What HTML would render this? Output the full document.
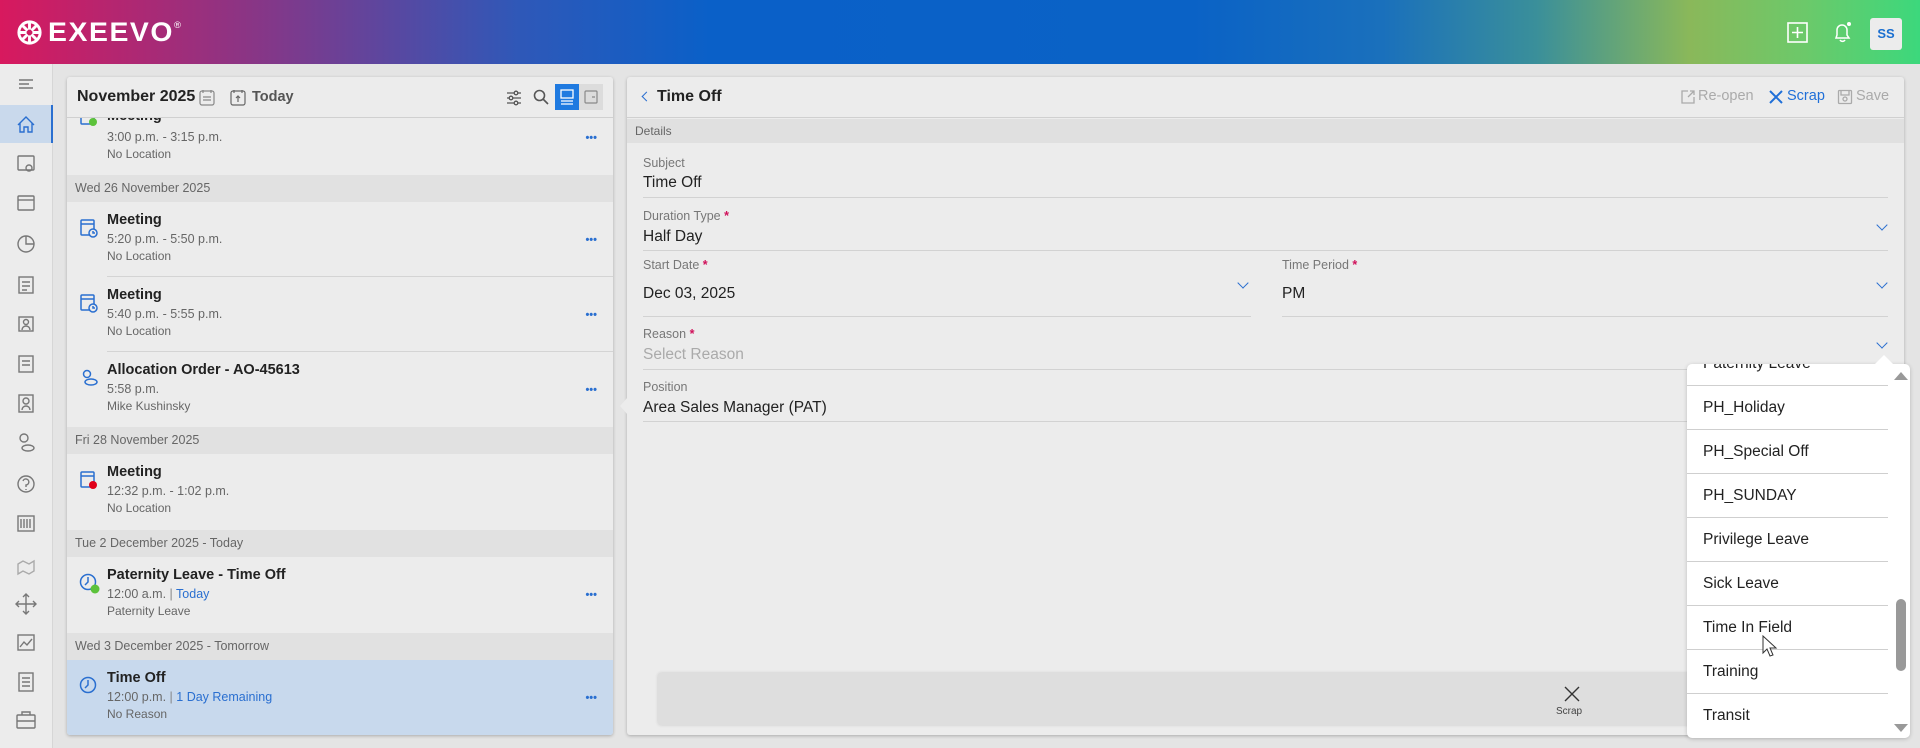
<!DOCTYPE html>
<html><head><meta charset="utf-8"><style>
*{box-sizing:border-box;margin:0;padding:0}
body{width:1920px;height:748px;overflow:hidden;background:#e4e4e4;font-family:"Liberation Sans",sans-serif;position:relative;color:#222}
.a{position:absolute}
#hdr{left:0;top:0;width:1920px;height:64px;background:linear-gradient(90deg,#d8195e 0%,#8a3585 13%,#2f58b8 27%,#0a60c8 37%,#0a62c6 62%,#1a70bc 72%,#3a8f9a 80%,#8ab85a 88%,#6cc96a 94%,#3cd87c 100%)}
#side{left:0;top:64px;width:53px;height:684px;background:#ececec;border-right:1px solid #d6d6d6}
.panel{background:#ececec;box-shadow:0 1px 3px rgba(0,0,0,.25);border-radius:3px}
.ph{font-weight:bold;font-size:16px}
.date{position:absolute;left:0;width:546px;background:#e1e1e1;color:#666;font-size:12.5px;padding-left:8px;line-height:27px}
.it{position:absolute;left:0;width:546px}
.it b{position:absolute;left:40px;font-size:14.5px;color:#222}
.it .t{position:absolute;left:40px;font-size:12.5px;color:#666}
.it .dots{position:absolute;right:16px;color:#2a6fd0;font-size:11px;font-weight:bold;letter-spacing:0px}
.sep{position:absolute;left:40px;right:0;height:1px;background:#d4d4d4}
.lbl{position:absolute;font-size:12.5px;color:#777}
.lbl i{color:#d0105a;font-style:normal;font-weight:bold}
.val{position:absolute;font-size:15.5px;color:#222}
.ln{position:absolute;height:1px;background:#d2d2d2}
.chev{position:absolute;width:8px;height:8px;border-right:1.5px solid #2a6fd0;border-bottom:1.5px solid #2a6fd0;transform:rotate(45deg)}
.dd{position:absolute;left:0;width:201px;font-size:15.5px;color:#222;padding-left:16px;height:44px;line-height:44px;border-bottom:1px solid #cfcfcf}
</style></head><body>
<div id="hdr" class="a">
 <svg class="a" style="left:15px;top:18px" width="29" height="29" viewBox="0 0 30 30" fill="none" stroke="#fff" stroke-width="3"><circle cx="15" cy="15" r="11"/><path d="M15 4v8M26 15h-8M15 26v-8M4 15h8M8 8l5 5M22 8l-5 5M22 22l-5-5M8 22l5-5"/></svg>
 <div class="a" style="left:48px;top:17px;color:#fff;font-size:27px;font-weight:bold;letter-spacing:1.5px;transform:scaleX(1.05);transform-origin:left">EXEEVO<sup style="font-size:9px;font-weight:normal;vertical-align:13px;letter-spacing:0">®</sup></div>
 <svg class="a" style="left:1787px;top:22px" width="21" height="21" viewBox="0 0 21 21" fill="none" stroke="#fff" stroke-width="1.6"><rect x="1" y="1" width="19" height="19"/><path d="M10.5 5v11M5 10.5h11"/></svg>
 <svg class="a" style="left:1832px;top:20px" width="22" height="24" viewBox="0 0 22 24" fill="none" stroke="#fff" stroke-width="1.5"><path d="M4 18h13l-2-3v-5a5 5 0 0 0-10 0v5z M8 20a3 3 0 0 0 5 0"/><circle cx="17" cy="4" r="2" fill="#fff" stroke="none"/></svg>
 <div class="a" style="left:1870px;top:18px;width:32px;height:32px;background:#ececec;border-radius:3px;color:#1a6fd0;font-weight:bold;font-size:13px;text-align:center;line-height:32px">SS</div>
</div>
<div id="side" class="a">
 <div class="a" style="left:0;top:41px;width:53px;height:38px;background:#c9d9ec;border-right:2px solid #2a6fd0"></div>
 <svg width="53" height="684" class="a" style="left:0;top:0" fill="none" stroke="#777" stroke-width="1.4">
  <path d="M19 16h14M19 20h10M19 24h14"/>
  <path d="M18 61l8-8 8 8M20 59v9h4v-5h4v5h4v-9" stroke="#2a6fd0"/>
  <rect x="18" y="92" width="16" height="14" rx="1"/><circle cx="29" cy="104" r="3"/>
  <rect x="18" y="132" width="16" height="14" rx="1"/><path d="M18 136h16"/>
  <circle cx="26" cy="180" r="8"/><path d="M26 172v8h8"/>
  <rect x="19" y="213" width="14" height="16"/><path d="M22 218h8M22 222h8M22 226h5"/>
  <rect x="19" y="253" width="14" height="14"/><circle cx="26" cy="258" r="2.5"/><path d="M22 266a4 4 0 0 1 8 0"/>
  <rect x="19" y="292" width="14" height="16"/><path d="M22 297h8M22 301h8"/>
  <rect x="19" y="331" width="14" height="17"/><circle cx="26" cy="337" r="3"/><path d="M22 346a4 4 0 0 1 8 0"/>
  <circle cx="24" cy="374" r="4"/><ellipse cx="28" cy="384" rx="6" ry="3"/>
  <circle cx="26" cy="420" r="8"/><path d="M23 417a3 3 0 1 1 3 4v2M26 425v1"/>
  <rect x="18" y="452" width="16" height="15"/><path d="M21 455v9M24 455v9M27 455v9M30 455v9"/>
  <path d="M18 500l5-3 6 3 5-3v10l-5 3-6-3-5 3z" stroke="#aaa"/>
  <path d="M26 530v20M16 540h20M23 533l3-3 3 3M23 547l3 3 3-3M19 537l-3 3 3 3M33 537l3 3-3 3"/>
  <rect x="18" y="571" width="16" height="15"/><path d="M20 583l4-5 3 3 5-6"/>
  <rect x="19" y="609" width="14" height="18"/><path d="M22 614h8M22 618h8M22 622h8"/>
  <rect x="17" y="651" width="18" height="13" rx="1"/><path d="M22 651v-3h8v3M17 657h18"/>
 </svg>
</div>

<div class="a panel" style="left:67px;top:77px;width:546px;height:658px;overflow:hidden">
 <div class="it" style="top:35px;height:63px">
  <svg class="a" style="left:12px;top:-5px" width="20" height="22" viewBox="0 0 20 22" fill="none" stroke="#2a6fd0" stroke-width="1.5"><rect x="2" y="2" width="13" height="15" rx="1"/><path d="M2 6h13"/><circle cx="14" cy="15" r="4" fill="#5cc23a" stroke="none"/></svg>
  <b style="top:-4px">Meeting</b><div class="t" style="top:18px">3:00 p.m. - 3:15 p.m.</div><div class="t" style="top:35px;font-size:12px">No Location</div><div class="dots" style="top:20px">•••</div>
 </div>
 <div class="a" style="left:0;top:0;width:546px;height:41px;border-bottom:1px solid #d0d0d0;background:#ececec;z-index:2">
  <div class="a ph" style="left:10px;top:11px">November 2025</div>
  <svg class="a" style="left:132px;top:12px" width="16" height="17" viewBox="0 0 16 17" fill="none" stroke="#888" stroke-width="1.2"><rect x="1" y="2" width="14" height="14" rx="2"/><path d="M4 1v3M12 1v3M4 8h8M4 11h8"/></svg>
  <svg class="a" style="left:163px;top:12px" width="16" height="17" viewBox="0 0 16 17" fill="none" stroke="#666" stroke-width="1.2"><rect x="1" y="2" width="14" height="14" rx="2"/><path d="M4 1v3M12 1v3M8 13V7M6 9l2-2 2 2"/></svg>
  <div class="a" style="left:185px;top:12px;font-size:14.5px;color:#555;font-weight:bold">Today</div>
  <svg class="a" style="left:439px;top:12px" width="16" height="17" viewBox="0 0 16 17" fill="none" stroke="#555" stroke-width="1.3"><path d="M1 4h14M1 9h14M1 14h14"/><circle cx="10" cy="4" r="1.8" fill="#ececec"/><circle cx="5" cy="9" r="1.8" fill="#ececec"/><circle cx="10" cy="14" r="1.8" fill="#ececec"/></svg>
  <svg class="a" style="left:466px;top:12px" width="16" height="16" viewBox="0 0 16 16" fill="none" stroke="#555" stroke-width="1.6"><circle cx="6.5" cy="6.5" r="5"/><path d="M10 10l5 5"/></svg>
  <div class="a" style="left:488px;top:7px;width:24px;height:26px;background:#1f7ae0"></div>
  <svg class="a" style="left:493px;top:12px" width="14" height="16" viewBox="0 0 14 16" fill="none" stroke="#fff" stroke-width="1.3"><rect x="1" y="1" width="12" height="8"/><path d="M1 12h12M1 15h12"/></svg>
  <div class="a" style="left:512px;top:7px;width:24px;height:26px;background:#dcdcdc"></div>
  <svg class="a" style="left:517px;top:12px" width="14" height="16" viewBox="0 0 14 16" fill="none" stroke="#888" stroke-width="1.2"><rect x="1" y="2" width="12" height="12" rx="1"/><path d="M8 8h3"/></svg>
 </div>
 <div class="date" style="top:98px">Wed 26 November 2025</div>
 <div class="it" style="top:125px">
  <svg class="a" style="left:12px;top:16px" width="20" height="20" viewBox="0 0 20 20" fill="none" stroke="#2a6fd0" stroke-width="1.5"><rect x="2" y="2" width="13" height="15" rx="1"/><path d="M2 6h13"/><circle cx="14" cy="15" r="4" fill="#ececec"/><path d="M14 13v2h2"/></svg>
  <b style="top:10px">Meeting</b><div class="t" style="top:30px">5:20 p.m. - 5:50 p.m.</div><div class="t" style="top:47px;font-size:12px">No Location</div><div class="dots" style="top:32px">•••</div>
 </div>
 <div class="sep" style="top:199px"></div>
 <div class="it" style="top:200px">
  <svg class="a" style="left:12px;top:16px" width="20" height="20" viewBox="0 0 20 20" fill="none" stroke="#2a6fd0" stroke-width="1.5"><rect x="2" y="2" width="13" height="15" rx="1"/><path d="M2 6h13"/><circle cx="14" cy="15" r="4" fill="#ececec"/><path d="M14 13v2h2"/></svg>
  <b style="top:10px">Meeting</b><div class="t" style="top:30px">5:40 p.m. - 5:55 p.m.</div><div class="t" style="top:47px;font-size:12px">No Location</div><div class="dots" style="top:32px">•••</div>
 </div>
 <div class="sep" style="top:274px"></div>
 <div class="it" style="top:275px">
  <svg class="a" style="left:12px;top:16px" width="20" height="20" viewBox="0 0 20 20" fill="none" stroke="#2a6fd0" stroke-width="1.5"><circle cx="8" cy="6" r="3.5"/><ellipse cx="12" cy="14" rx="6" ry="3"/></svg>
  <b style="top:10px">Allocation Order - AO-45613</b><div class="t" style="top:30px">5:58 p.m.</div><div class="t" style="top:47px;font-size:12px">Mike Kushinsky</div><div class="dots" style="top:32px">•••</div>
 </div>
 <div class="date" style="top:350px">Fri 28 November 2025</div>
 <div class="it" style="top:377px">
  <svg class="a" style="left:12px;top:16px" width="20" height="20" viewBox="0 0 20 20" fill="none" stroke="#2a6fd0" stroke-width="1.5"><rect x="2" y="2" width="13" height="15" rx="1"/><path d="M2 6h13"/><circle cx="14" cy="15" r="4" fill="#e0001a" stroke="none"/></svg>
  <b style="top:10px">Meeting</b><div class="t" style="top:30px">12:32 p.m. - 1:02 p.m.</div><div class="t" style="top:47px;font-size:12px">No Location</div>
 </div>
 <div class="date" style="top:453px">Tue 2 December 2025 - Today</div>
 <div class="it" style="top:480px">
  <svg class="a" style="left:12px;top:16px" width="22" height="22" viewBox="0 0 22 22" fill="none" stroke="#2a6fd0" stroke-width="1.5"><circle cx="9" cy="9" r="7.5"/><path d="M9 4v5l-3 3"/><circle cx="16" cy="16" r="4.5" fill="#5cc23a" stroke="none"/></svg>
  <b style="top:10px">Paternity Leave - Time Off</b><div class="t" style="top:30px">12:00 a.m. <span style="color:#888">|</span> <span style="color:#2a6fd0">Today</span></div><div class="t" style="top:47px;font-size:12px">Paternity Leave</div><div class="dots" style="top:32px">•••</div>
 </div>
 <div class="date" style="top:556px">Wed 3 December 2025 - Tomorrow</div>
 <div class="it" style="top:583px;height:75px;background:#c8d9ed">
  <svg class="a" style="left:12px;top:16px" width="20" height="20" viewBox="0 0 20 20" fill="none" stroke="#2a6fd0" stroke-width="1.5"><circle cx="9" cy="9" r="7.5"/><path d="M9 4v5l-3 3"/></svg>
  <b style="top:10px">Time Off</b><div class="t" style="top:30px">12:00 p.m. <span style="color:#888">|</span> <span style="color:#2a6fd0">1 Day Remaining</span></div><div class="t" style="top:47px;font-size:12px">No Reason</div><div class="dots" style="top:32px">•••</div>
 </div>
</div>

<div class="a panel" style="left:627px;top:77px;width:1277px;height:658px">
 <div class="a" style="left:0;top:0;width:1277px;height:41px;border-bottom:1px solid #d0d0d0">
  <div class="a" style="left:16px;top:16px;width:7px;height:7px;border-left:1.6px solid #2a6fd0;border-bottom:1.6px solid #2a6fd0;transform:rotate(45deg)"></div>
  <div class="a ph" style="left:30px;top:11px">Time Off</div>
  <svg class="a" style="left:1053px;top:12px" width="16" height="16" viewBox="0 0 16 16" fill="none" stroke="#aaa" stroke-width="1.3"><path d="M8 2H2v12h12V8M10 2h4v4M14 2L8 8"/></svg>
  <div class="a" style="left:1071px;top:11px;font-size:14.5px;color:#aaa">Re-open</div>
  <svg class="a" style="left:1141px;top:12px" width="16" height="16" viewBox="0 0 16 16" fill="none" stroke="#1f6fd8" stroke-width="2"><path d="M2 2l12 12M14 2L2 14"/></svg>
  <div class="a" style="left:1160px;top:11px;font-size:14.5px;color:#1f6fd8">Scrap</div>
  <svg class="a" style="left:1210px;top:12px" width="16" height="16" viewBox="0 0 16 16" fill="none" stroke="#aaa" stroke-width="1.3"><rect x="1.5" y="1.5" width="13" height="13" rx="1"/><path d="M4 2v4h8V2"/><circle cx="8" cy="10" r="2"/></svg>
  <div class="a" style="left:1229px;top:11px;font-size:14.5px;color:#aaa">Save</div>
 </div>
 <div class="a" style="left:0;top:42px;width:1277px;height:24px;background:#e0e0e0;font-size:12px;color:#666;padding:5px 8px">Details</div>
 <div class="lbl" style="left:16px;top:79px">Subject</div>
 <div class="val" style="left:16px;top:97px">Time Off</div>
 <div class="ln" style="left:16px;top:120px;width:1245px"></div>
 <div class="lbl" style="left:16px;top:132px">Duration Type <i>*</i></div>
 <div class="val" style="left:16px;top:151px">Half Day</div>
 <div class="chev" style="left:1251px;top:144px"></div>
 <div class="ln" style="left:16px;top:173px;width:1245px"></div>
 <div class="lbl" style="left:16px;top:181px">Start Date <i>*</i></div>
 <div class="val" style="left:16px;top:208px">Dec 03, 2025</div>
 <div class="chev" style="left:612px;top:202px"></div>
 <div class="ln" style="left:16px;top:239px;width:608px"></div>
 <div class="lbl" style="left:655px;top:181px">Time Period <i>*</i></div>
 <div class="val" style="left:655px;top:208px">PM</div>
 <div class="chev" style="left:1251px;top:202px"></div>
 <div class="ln" style="left:655px;top:239px;width:606px"></div>
 <div class="lbl" style="left:16px;top:250px">Reason <i>*</i></div>
 <div class="val" style="left:16px;top:269px;color:#aaa">Select Reason</div>
 <div class="chev" style="left:1251px;top:262px"></div>
 <div class="ln" style="left:16px;top:292px;width:1245px"></div>
 <div class="lbl" style="left:16px;top:303px">Position</div>
 <div class="val" style="left:16px;top:322px">Area Sales Manager (PAT)</div>
 <div class="ln" style="left:16px;top:344px;width:1245px"></div>
 <div class="a" style="left:31px;top:596px;width:1246px;height:52px;background:#dedede;border-radius:3px;box-shadow:0 0 3px rgba(0,0,0,.15)"></div>
 <svg class="a" style="left:937px;top:609px" width="16" height="16" viewBox="0 0 16 16" fill="none" stroke="#333" stroke-width="1.4"><path d="M1 1l14 14M15 1L1 15"/></svg>
 <div class="a" style="left:929px;top:629px;font-size:10px;color:#444">Scrap</div>
</div>
<div class="a" style="left:620px;top:397px;width:0;height:0;border-top:9px solid transparent;border-bottom:9px solid transparent;border-right:8px solid #ececec"></div>

<div class="a" style="left:1687px;top:364px;width:223px;height:374px;background:#fff;border-radius:5px;box-shadow:0 1px 4px rgba(0,0,0,.2);overflow:hidden">
 <div class="dd" style="top:-22px">Paternity Leave</div>
 <div class="dd" style="top:22px">PH_Holiday</div>
 <div class="dd" style="top:66px">PH_Special Off</div>
 <div class="dd" style="top:110px">PH_SUNDAY</div>
 <div class="dd" style="top:154px">Privilege Leave</div>
 <div class="dd" style="top:198px">Sick Leave</div>
 <div class="dd" style="top:242px">Time In Field</div>
 <div class="dd" style="top:286px">Training</div>
 <div class="dd" style="top:330px;border-bottom:none">Transit</div>
 <div class="a" style="left:207px;top:8px;width:0;height:0;border-left:7px solid transparent;border-right:7px solid transparent;border-bottom:8px solid #999"></div>
 <div class="a" style="left:209px;top:235px;width:10px;height:72px;background:#999;border-radius:5px"></div>
 <div class="a" style="left:207px;top:360px;width:0;height:0;border-left:7px solid transparent;border-right:7px solid transparent;border-top:8px solid #999"></div>
</div>
<div class="a" style="left:1875px;top:355px;width:0;height:0;border-left:9px solid transparent;border-right:9px solid transparent;border-bottom:9px solid #fff"></div>
<svg class="a" style="left:1762px;top:635px" width="16" height="24" viewBox="0 0 16 24"><path d="M1 1v17l4-4 3 7 3-1-3-7h6z" fill="#fff" stroke="#333" stroke-width="1"/></svg>
</body></html>
